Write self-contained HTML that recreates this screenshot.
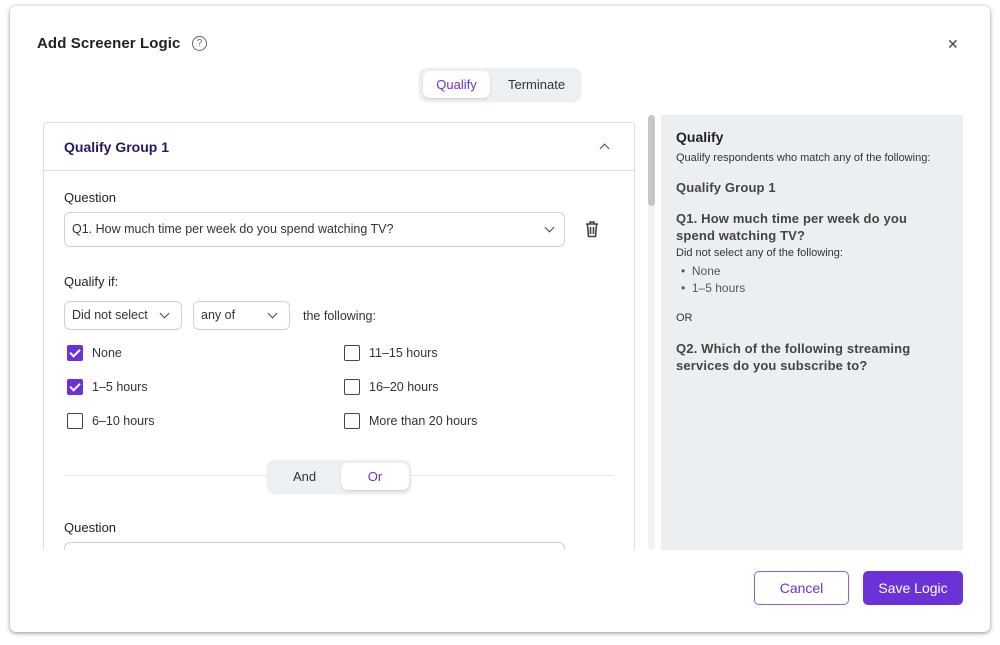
<!DOCTYPE html>
<html><head><style>
*{box-sizing:border-box;margin:0;padding:0}
body{width:1000px;height:645px;background:#fff;font-family:"Liberation Sans",sans-serif;position:relative;overflow:hidden;color:#222}
.dlg{position:absolute;left:10px;top:6px;width:980px;height:626px;background:#fff;border-radius:6px;box-shadow:0 1px 4px rgba(0,0,0,.45);}
.a{position:absolute}
.title{left:37px;top:35px;font-size:15px;font-weight:bold;color:#222;letter-spacing:.1px}
.help{left:192px;top:36px;width:15px;height:15px;border:1.3px solid #666;border-radius:50%;font-size:10px;text-align:center;line-height:13px;color:#666}
.close{left:947px;top:36px;font-size:14px;color:#444}
.seg{background:#edf0f3;border-radius:8px;box-shadow:0 1px 2px rgba(0,0,0,.1)}
.segon{background:#fff;border-radius:7px;box-shadow:0 1px 2px rgba(0,0,0,.15);color:#6a32d8;text-align:center}
.clip{left:43px;top:115px;width:600px;height:435px;overflow:hidden}
.card{position:absolute;left:0;top:7px;width:592px;height:500px;border:1px solid #dcdfe3;border-radius:4px}
.lbl{font-size:13px;color:#222}
.sel{border:1px solid #cfd3d8;border-radius:6px;background:#fff;font-size:12.5px;color:#333;padding-left:7px}
.chev{position:absolute;width:7px;height:7px;border-right:1.5px solid #444;border-bottom:1.5px solid #444;transform:rotate(45deg)}
.cb{width:16px;height:16px;border:1.5px solid #444;border-radius:2px}
.cb.on{background:#6a32d8;border-color:#6a32d8}
.cb.on:after{content:"";position:absolute;left:4px;top:1px;width:4px;height:8px;border-right:2px solid #fff;border-bottom:2px solid #fff;transform:rotate(45deg)}
.opt{font-size:12.5px;color:#333}
.panel{left:661px;top:115px;width:302px;height:435px;background:#eceff2}
.panel div{position:absolute;left:15px;color:#333}
.b{font-weight:bold;font-size:13px;color:#444!important;letter-spacing:.15px}
.s{font-size:11px}
</style></head><body>
<div class="dlg"></div>
<div class="a title">Add Screener Logic</div>
<div class="a help">?</div>
<div class="a close">✕</div>
<div class="a seg" style="left:419px;top:68px;width:162px;height:33px"></div>
<div class="a segon" style="left:423px;top:71px;width:67px;height:27px;font-size:13px;line-height:27px">Qualify</div>
<div class="a" style="left:508px;top:77px;font-size:13px;color:#333">Terminate</div>

<div class="a clip">
 <div class="card">
  <div class="a" style="left:20px;top:16px;font-size:14px;font-weight:bold;color:#2b1660">Qualify Group 1</div>
  <div class="chev" style="left:557px;top:22px;transform:rotate(225deg)"></div>
  <div class="a" style="left:0;top:47px;width:590px;border-top:1px solid #dcdfe3"></div>
  <div class="a lbl" style="left:20px;top:67px">Question</div>
  <div class="a sel" style="left:20px;top:89px;width:501px;height:35px;line-height:33px">Q1. How much time per week do you spend watching TV?<span class="chev" style="left:481px;top:11px"></span></div>
  <svg class="a" style="left:540px;top:98px" width="16" height="17" viewBox="0 0 16 17"><path d="M2 3h12M6 3V1h4v2M3.5 3.5l1 12h7l1-12M6.5 6v7M9.5 6v7" fill="none" stroke="#444" stroke-width="1.6"/></svg>
  <div class="a lbl" style="left:20px;top:151px">Qualify if:</div>
  <div class="a sel" style="left:20px;top:178px;width:118px;height:29px;line-height:27px">Did not select<span class="chev" style="left:96px;top:8px"></span></div>
  <div class="a sel" style="left:149px;top:178px;width:97px;height:29px;line-height:27px">any of<span class="chev" style="left:75px;top:8px"></span></div>
  <div class="a opt" style="left:259px;top:186px">the following:</div>
  <div class="a cb on" style="left:23px;top:222px"></div><div class="a opt" style="left:48px;top:223px">None</div>
  <div class="a cb on" style="left:23px;top:256px"></div><div class="a opt" style="left:48px;top:257px">1–5 hours</div>
  <div class="a cb" style="left:23px;top:290px"></div><div class="a opt" style="left:48px;top:291px">6–10 hours</div>
  <div class="a cb" style="left:300px;top:222px"></div><div class="a opt" style="left:325px;top:223px">11–15 hours</div>
  <div class="a cb" style="left:300px;top:256px"></div><div class="a opt" style="left:325px;top:257px">16–20 hours</div>
  <div class="a cb" style="left:300px;top:290px"></div><div class="a opt" style="left:325px;top:291px">More than 20 hours</div>
  <div class="a" style="left:20px;top:352px;width:550px;border-top:1px solid #e6e8eb"></div>
  <div class="a seg" style="left:223px;top:337px;width:144px;height:33px"></div>
  <div class="a" style="left:249px;top:346px;font-size:13px;color:#333">And</div>
  <div class="a segon" style="left:297px;top:340px;width:68px;height:27px;font-size:13px;line-height:27px">Or</div>
  <div class="a lbl" style="left:20px;top:397px">Question</div>
  <div class="a sel" style="left:20px;top:419px;width:501px;height:35px"></div>
 </div>
</div>
<div class="a" style="left:648px;top:115px;width:7px;height:435px;background:#f1f2f4;border-radius:4px"></div>
<div class="a" style="left:648px;top:115px;width:7px;height:91px;background:#c3c7cc;border-radius:4px"></div>

<div class="a panel">
 <div style="top:14px;font-size:14px;font-weight:bold;color:#222!important">Qualify</div>
 <div class="s" style="top:37px">Qualify respondents who match any of the following:</div>
 <div class="b" style="top:65px">Qualify Group 1</div>
 <div class="b" style="top:95px;line-height:17px;width:272px">Q1. How much time per week do you spend watching TV?</div>
 <div class="s" style="top:132px">Did not select any of the following:</div>
 <div style="top:149px;font-size:12px;color:#555!important;left:20px">•&nbsp; None</div>
 <div style="top:166px;font-size:12px;color:#555!important;left:20px">•&nbsp; 1–5 hours</div>
 <div class="s" style="top:197px">OR</div>
 <div class="b" style="top:225px;line-height:17px;width:285px">Q2. Which of the following streaming services do you subscribe to?</div>
</div>

<div class="a" style="left:754px;top:571px;width:95px;height:34px;border:1px solid #8b5ee6;border-radius:5px;color:#6a32d8;font-size:14px;text-align:center;line-height:32px">Cancel</div>
<div class="a" style="left:863px;top:571px;width:100px;height:34px;background:#6a32d8;border-radius:5px;color:#fff;font-size:14px;text-align:center;line-height:34px">Save Logic</div>
</body></html>
